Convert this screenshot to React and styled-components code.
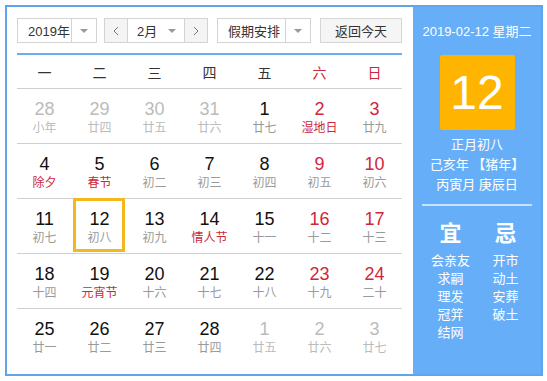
import React from "react";
import styled, { createGlobalStyle, css } from "styled-components";

const GlobalStyle = createGlobalStyle`
  html, body { margin: 0; padding: 0; background: #fff; }
  body { font-family: "Liberation Sans", "Noto Sans CJK SC", Arial, sans-serif; }
`;

const Frame = styled.div`
  margin: 5px;
  width: 538px;
  height: 371px;
  box-sizing: border-box;
  border: 2px solid #5ea5ec;
  display: flex;
  background: #fff;
`;

const LeftPane = styled.div`
  width: 406px;
  box-sizing: border-box;
  padding: 11px 11px 0 10px;
  display: flex;
  flex-direction: column;
`;

const Toolbar = styled.div`
  display: flex;
  height: 25px;
  margin-bottom: 10px;
`;

const Select = styled.div`
  width: ${(p) => p.$w}px;
  margin-left: ${(p) => p.$ml ?? 0}px;
  box-sizing: border-box;
  border: 1px solid #d3d3d3;
  display: flex;
  align-items: stretch;
  background: #fff;
  font-size: 13px;
  color: #333;
`;

const SelectText = styled.div`
  flex: 1;
  display: flex;
  align-items: center;
  padding-left: ${(p) => p.$pl ?? 10}px;
`;

const SelectArrow = styled.div`
  width: ${(p) => p.$w ?? 23}px;
  display: flex;
  align-items: center;
  justify-content: center;
  ${(p) => !p.$plain && css`border-left: 1px solid #d3d3d3;`}
  &::before {
    content: "";
    border-left: 4px solid transparent;
    border-right: 4px solid transparent;
    border-top: 4px solid #9a9a9a;
  }
`;

const NavButton = styled.div`
  width: 22px;
  display: flex;
  align-items: center;
  justify-content: center;
  background: #f4f4f4;
  ${(p) => (p.$side === "left" ? css`border-right: 1px solid #d3d3d3;` : css`border-left: 1px solid #d3d3d3;`)}
`;

const TodayButton = styled.div`
  width: 82px;
  margin-left: 9px;
  box-sizing: border-box;
  border: 1px solid #d6d6d6;
  background: #f5f5f5;
  display: flex;
  align-items: center;
  justify-content: center;
  font-size: 13px;
  color: #333;
`;

const BlueRule = styled.div`
  height: 2px;
  background: #6aaeef;
`;

const Grid = styled.div`
  display: grid;
  grid-template-columns: repeat(7, 55px);
`;

const WeekHeader = styled(Grid)`
  height: 33px;
  border-bottom: 1px solid #d0d0d0;
  align-items: center;
`;

const WeekDayName = styled.div`
  text-align: center;
  font-size: 14px;
  color: ${(p) => (p.$weekend ? "#c9283a" : "#333")};
`;

const WeekRow = styled(Grid)`
  height: 54px;
  border-bottom: ${(p) => (p.$last ? "none" : "1px solid #d0d0d0")};
`;

const DayCell = styled.div`
  position: relative;
  display: flex;
  flex-direction: column;
  align-items: center;
  padding-top: 10px;
  box-sizing: border-box;
  ${(p) =>
    p.$today &&
    css`
      &::after {
        content: "";
        position: absolute;
        top: -1px;
        left: 1px;
        right: 2px;
        bottom: 1px;
        border: 3px solid #f5b71e;
      }
    `}
`;

const DayNum = styled.div`
  font-size: 18px;
  line-height: 20px;
  color: ${(p) => (p.$other ? "#bbbbbb" : p.$weekend ? "#d0263b" : "#111")};
`;

const Lunar = styled.div`
  font-size: 12px;
  line-height: 18px;
  color: ${(p) => (p.$other ? "#bbbbbb" : p.$festival ? "#c9283a" : "#9a9a9a")};
`;

const RightPane = styled.div`
  flex: 1;
  background: #66aff8;
  color: #fff;
  display: flex;
  flex-direction: column;
  align-items: center;
  padding-top: 15px;
`;

const DateLine = styled.div`
  font-size: 13px;
  line-height: 20px;
`;

const BigDay = styled.div`
  margin-top: 13px;
  width: 75px;
  height: 75px;
  background: #ffb500;
  border-radius: 2px;
  display: flex;
  align-items: center;
  justify-content: center;
  font-family: "Liberation Sans", Arial, sans-serif;
  font-size: 48px;
  color: #fff;
`;

const InfoBlock = styled.div`
  margin-top: 5px;
  display: flex;
  flex-direction: column;
  align-items: center;
`;

const InfoLine = styled.div`
  font-size: 13px;
  line-height: 20px;
  white-space: pre;
`;

const Divider = styled.div`
  margin-top: 9px;
  width: 110px;
  height: 2px;
  background: #c9e2fb;
`;

const AdviceGrid = styled.div`
  margin-top: 13px;
  display: grid;
  grid-template-columns: 55px 55px;
  padding-left: 2px;
`;

const AdviceColumn = styled.div`
  display: flex;
  flex-direction: column;
  align-items: center;
`;

const AdviceHead = styled.div`
  font-size: 22px;
  line-height: 30px;
  font-weight: bold;
  margin-bottom: 3px;
`;

const AdviceItem = styled.div`
  font-size: 13px;
  line-height: 18px;
`;

const Chevron = ({ dir }) => (
  <svg width="6" height="10" viewBox="0 0 6 10">
    <polyline
      points={dir === "left" ? "5,1 1,5 5,9" : "1,1 5,5 1,9"}
      fill="none"
      stroke="#777"
      strokeWidth="1"
    />
  </svg>
);

const weeks = [
  [
    ["28", "小年", "o"], ["29", "廿四", "o"], ["30", "廿五", "o"], ["31", "廿六", "o"],
    ["1", "廿七"], ["2", "湿地日", "f"], ["3", "廿九"],
  ],
  [
    ["4", "除夕", "f"], ["5", "春节", "f"], ["6", "初二"], ["7", "初三"],
    ["8", "初四"], ["9", "初五"], ["10", "初六"],
  ],
  [
    ["11", "初七"], ["12", "初八", "t"], ["13", "初九"], ["14", "情人节", "f"],
    ["15", "十一"], ["16", "十二"], ["17", "十三"],
  ],
  [
    ["18", "十四"], ["19", "元宵节", "f"], ["20", "十六"], ["21", "十七"],
    ["22", "十八"], ["23", "十九"], ["24", "二十"],
  ],
  [
    ["25", "廿一"], ["26", "廿二"], ["27", "廿三"], ["28", "廿四"],
    ["1", "廿五", "o"], ["2", "廿六", "o"], ["3", "廿七", "o"],
  ],
];

const dayNames = ["一", "二", "三", "四", "五", "六", "日"];

export default function App() {
  return (
    <>
      <GlobalStyle />
      <Frame>
        <LeftPane>
          <Toolbar>
            <Select $w={80}>
              <SelectText $pl={10}>2019年</SelectText>
              <SelectArrow $w={24} />
            </Select>
            <Select $w={104} $ml={7}>
              <NavButton $side="left">
                <Chevron dir="left" />
              </NavButton>
              <SelectText $pl={9}>2月</SelectText>
              <SelectArrow $plain $w={24} />
              <NavButton $side="right">
                <Chevron dir="right" />
              </NavButton>
            </Select>
            <Select $w={94} $ml={9}>
              <SelectText $pl={10}>假期安排</SelectText>
              <SelectArrow $w={24} />
            </Select>
            <TodayButton>返回今天</TodayButton>
          </Toolbar>
          <BlueRule />
          <WeekHeader>
            {dayNames.map((d, i) => (
              <WeekDayName key={d} $weekend={i >= 5}>
                {d}
              </WeekDayName>
            ))}
          </WeekHeader>
          {weeks.map((week, wi) => (
            <WeekRow key={wi} $last={wi === weeks.length - 1}>
              {week.map(([n, l, k], di) => (
                <DayCell key={di} $today={k === "t"}>
                  <DayNum $other={k === "o"} $weekend={di >= 5}>
                    {n}
                  </DayNum>
                  <Lunar $other={k === "o"} $festival={k === "f"}>
                    {l}
                  </Lunar>
                </DayCell>
              ))}
            </WeekRow>
          ))}
        </LeftPane>
        <RightPane>
          <DateLine>2019-02-12 星期二</DateLine>
          <BigDay>12</BigDay>
          <InfoBlock>
            <InfoLine>正月初八</InfoLine>
            <InfoLine>己亥年 【猪年】</InfoLine>
            <InfoLine>丙寅月 庚辰日</InfoLine>
          </InfoBlock>
          <Divider />
          <AdviceGrid>
            <AdviceColumn>
              <AdviceHead>宜</AdviceHead>
              {["会亲友", "求嗣", "理发", "冠笄", "结网"].map((t) => (
                <AdviceItem key={t}>{t}</AdviceItem>
              ))}
            </AdviceColumn>
            <AdviceColumn>
              <AdviceHead>忌</AdviceHead>
              {["开市", "动土", "安葬", "破土"].map((t) => (
                <AdviceItem key={t}>{t}</AdviceItem>
              ))}
            </AdviceColumn>
          </AdviceGrid>
        </RightPane>
      </Frame>
    </>
  );
}
